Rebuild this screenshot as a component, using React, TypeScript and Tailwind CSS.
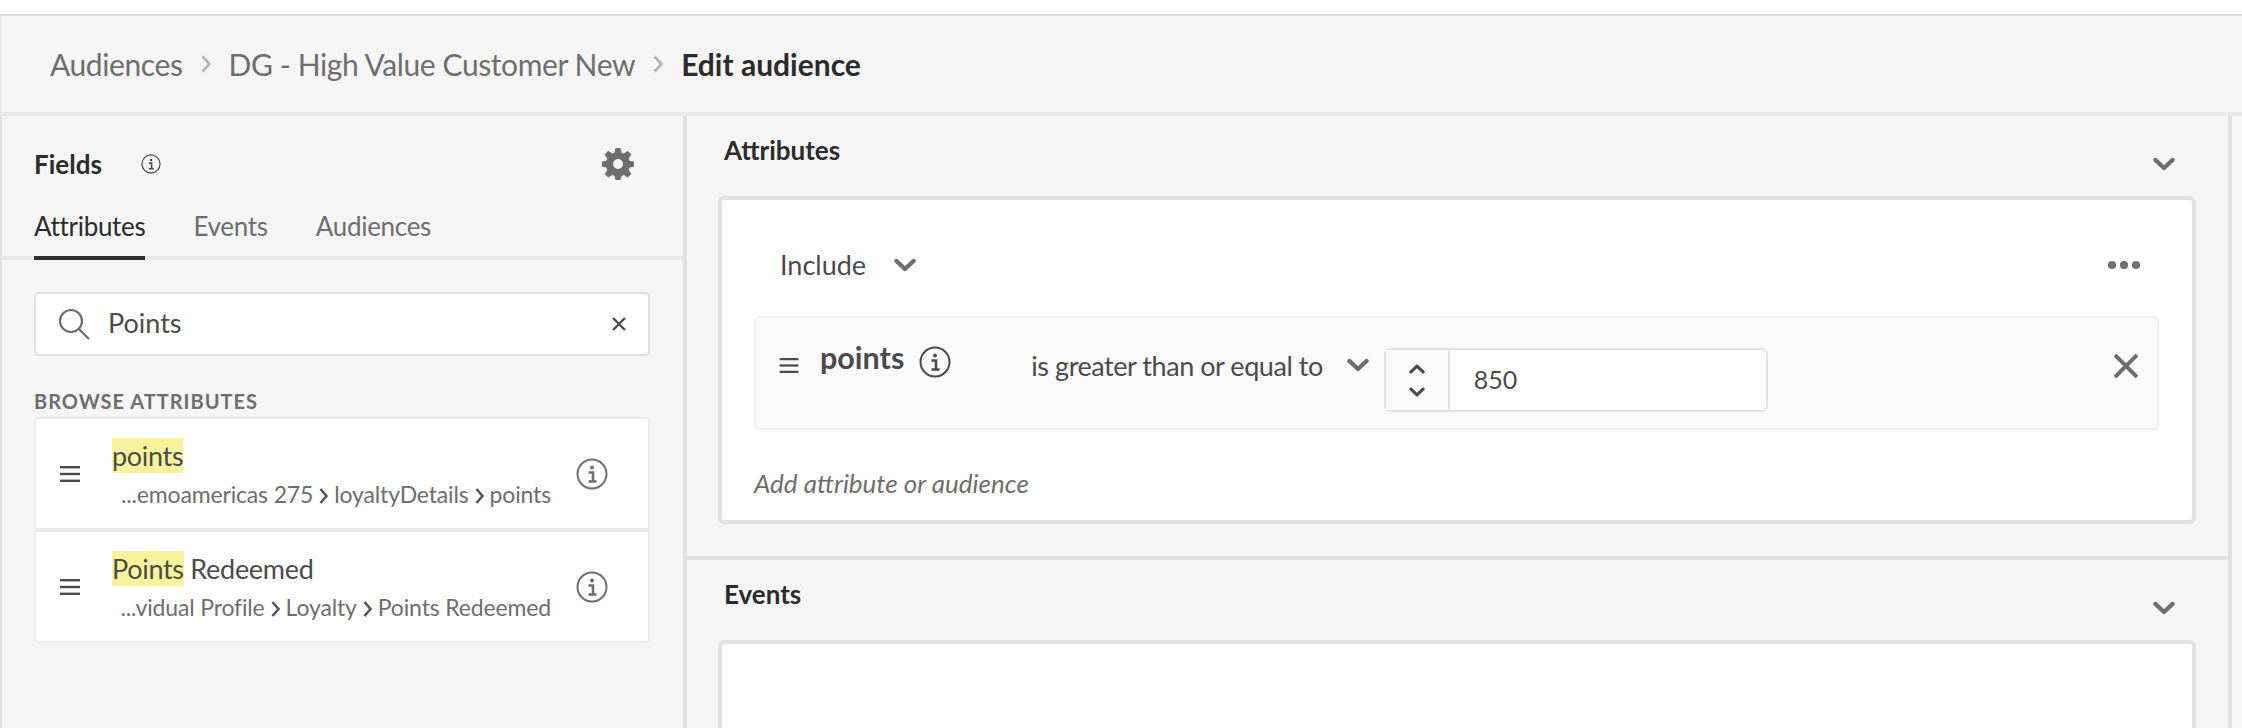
import type { ReactNode } from "react";

const fontStack = { fontFamily: "Lato, 'Noto Sans', sans-serif" };

function Chevron({ className }: { className: string }) {
  return (
    <svg className={className} viewBox="0 0 22 14" fill="none" stroke="currentColor" strokeWidth="4.4" strokeLinecap="round" strokeLinejoin="round">
      <path d="M2.5 3l8.5 8 8.5-8" />
    </svg>
  );
}

function InfoIcon({ className }: { className: string }) {
  return (
    <svg className={className} viewBox="0 0 32 32" fill="none" stroke="currentColor">
      <circle cx="16" cy="16" r="14.5" strokeWidth="2" />
      <circle cx="16" cy="9.5" r="2" fill="currentColor" stroke="none" />
      <path d="M12.5 14.5H17V23M12.5 23.5h8" strokeWidth="2.6" />
    </svg>
  );
}

function DragIcon({ className }: { className: string }) {
  return (
    <svg className={className} viewBox="0 0 20 16" fill="currentColor">
      <rect x="0" y="0" width="20" height="2.4" />
      <rect x="0" y="6.8" width="20" height="2.4" />
      <rect x="0" y="13.6" width="20" height="2.4" />
    </svg>
  );
}

function GearIcon({ className }: { className: string }) {
  return (
    <svg className={className} viewBox="0 0 32 32" fill="currentColor">
      <path
        fillRule="evenodd"
        d="M13.4 0h5.2l.8 4.6 2.4 1 3.9-2.7 3.7 3.7-2.7 3.9 1 2.4 4.3.7v5.2l-4.3.8-1 2.4 2.7 3.9-3.7 3.7-3.9-2.7-2.4 1-.8 4.1h-5.2l-.8-4.1-2.4-1-3.9 2.7-3.7-3.7 2.7-3.9-1-2.4L0 18.7v-5.2l4.3-.7 1-2.4-2.7-3.9 3.7-3.7 3.9 2.7 2.4-1zM16 11a5 5 0 1 0 0 10 5 5 0 0 0 0-10z"
      />
    </svg>
  );
}

function Crumb() {
  return (
    <svg className="h-[20px] w-[10px] text-[#b3b3b3]" viewBox="0 0 10 20" fill="none" stroke="currentColor" strokeWidth="2.6">
      <path d="M1.5 2.5L8.5 10l-7 7.5" />
    </svg>
  );
}

function PathSep() {
  return (
    <svg className="mx-[6px] inline-block h-[18px] w-[9px] align-[-2px] text-[#555]" viewBox="0 0 9 18" fill="none" stroke="currentColor" strokeWidth="2.6">
      <path d="M1.5 2l6 7-6 7" />
    </svg>
  );
}

function AttributeRow({ name, path, last }: { name: ReactNode; path: string[]; last?: boolean }) {
  return (
    <div className={`flex items-center bg-white pl-[24px] pr-[40px] ${last ? "h-[109px]" : "h-[113px] border-b-[4px] border-[#e9e9e9]"}`}>
      <DragIcon className="h-[16px] w-[20px] shrink-0 text-[#4b4b4b]" />
      <div className="ml-[32px] min-w-0 flex-1">
        <div className="h-[35px] text-[27px] leading-[35px] tracking-[-0.3px] text-[#4b4b4b]">{name}</div>
        <div className="mt-[6px] whitespace-nowrap pr-[25px] text-right text-[23px] leading-[30px] tracking-[-0.15px] text-[#6e6e6e]">
          {path.map((part, i) => (
            <span key={part}>
              {i > 0 && <PathSep />}
              {part}
            </span>
          ))}
        </div>
      </div>
      <InfoIcon className="h-[32px] w-[32px] shrink-0 text-[#6e6e6e]" />
    </div>
  );
}

function SectionHeader({ title }: { title: string }) {
  return (
    <div className="flex h-[80px] items-start justify-between pl-[6px] pr-[21px]">
      <h2 className="pt-[15px] text-[26px] font-bold text-[#2c2c2c]">{title}</h2>
      <Chevron className="mt-[41px] h-[14px] w-[22px] text-[#6e6e6e]" />
    </div>
  );
}

export default function App() {
  return (
    <div className="h-[728px] w-[2242px] overflow-hidden bg-white pt-[14px]" style={fontStack}>
      <div className="h-[714px] border-t-2 border-[#dcdcdc] bg-[#f5f5f5]">
        <header className="flex h-[100px] items-center gap-[18px] border-b-[4px] border-l-2 border-[#e9e9e9] pl-[48px] text-[30px] tracking-[-0.4px] text-[#6e6e6e]">
          <span>Audiences</span>
          <Crumb />
          <span>DG - High Value Customer New</span>
          <Crumb />
          <span className="font-bold tracking-[0px] text-[#2c2c2c]">Edit audience</span>
        </header>

        <div className="flex h-[612px]">
          <aside className="w-[687px] shrink-0 border-r-[4px] border-l-2 border-[#e1e1e1]">
            <div className="flex h-[92px] items-center justify-between pl-[32px] pr-[49px] pt-[4px]">
              <div className="flex items-center gap-[39px]">
                <h2 className="text-[26px] font-bold text-[#2c2c2c]">Fields</h2>
                <InfoIcon className="h-[20px] w-[20px] text-[#4b4b4b]" />
              </div>
              <GearIcon className="h-[32px] w-[32px] text-[#6e6e6e]" />
            </div>
            <div className="flex h-[52px] gap-[48px] border-b-[4px] border-[#e9e9e9] pl-[32px] pt-[3px] text-[26px] leading-[31px] tracking-[-0.3px] text-[#6e6e6e]">
              <div className="h-[49px] border-b-[4px] border-[#2c2c2c] text-[#2c2c2c]">Attributes</div>
              <div>Events</div>
              <div>Audiences</div>
            </div>
            <div className="mx-[32px] mt-[32px] flex h-[64px] w-[616px] items-center rounded-[5px] border-2 border-[#e1e1e1] bg-white pl-[22px] pr-[22px] text-[27px] text-[#4b4b4b]">
              <svg className="h-[32px] w-[32px] shrink-0 text-[#6e6e6e]" viewBox="0 0 32 32" fill="none" stroke="currentColor" strokeWidth="2.2">
                <circle cx="13" cy="13" r="11" />
                <path d="M21 21l10 10" />
              </svg>
              <span className="ml-[18px] flex-1 pb-[2px]">Points</span>
              <svg className="h-[14px] w-[14px] text-[#4b4b4b]" viewBox="0 0 14 14" fill="none" stroke="currentColor" strokeWidth="2.4">
                <path d="M1 1l12 12M13 1L1 13" />
              </svg>
            </div>
            <div className="ml-[32px] mt-[30px] h-[31px] text-[20px] font-bold tracking-[1px] text-[#6e6e6e]">BROWSE ATTRIBUTES</div>
            <div className="ml-[32px] w-[616px] overflow-hidden rounded-[5px] border-2 border-[#ebebeb]">
              <AttributeRow
                name={<span className="inline-block bg-[#f8f39b] text-[#4b4b4b]">points</span>}
                path={["...emoamericas 275", "loyaltyDetails", "points"]}
              />
              <AttributeRow
                last
                name={
                  <>
                    <span className="inline-block bg-[#f8f39b]">Points</span> Redeemed
                  </>
                }
                path={["...vidual Profile", "Loyalty", "Points Redeemed"]}
              />
            </div>
          </aside>

          <main className="w-[1545px] shrink-0 border-r-[4px] border-[#e1e1e1]">
            <section className="h-[444px] border-b-[4px] border-[#e1e1e1] pl-[31px] pr-[32px]">
              <SectionHeader title="Attributes" />
              <div className="h-[328px] rounded-[6px] border-[4px] border-[#e1e1e1] bg-white pl-[32px] pr-[33px]">
                <div className="flex h-[116px] items-center justify-between pl-[26px] pr-[19px] pt-[14px]">
                  <div className="flex items-center gap-[28px] text-[27px] text-[#4b4b4b]">
                    <span>Include</span>
                    <Chevron className="h-[14px] w-[22px] text-[#6e6e6e]" />
                  </div>
                  <div className="flex gap-[4px]">
                    <span className="h-[8px] w-[8px] rounded-full bg-[#6e6e6e]" />
                    <span className="h-[8px] w-[8px] rounded-full bg-[#6e6e6e]" />
                    <span className="h-[8px] w-[8px] rounded-full bg-[#6e6e6e]" />
                  </div>
                </div>
                <div className="flex h-[114px] items-start rounded-[6px] border-2 border-[#f0f0f0] bg-[#fafafa] pl-[23px] pr-[19px]">
                  <DragIcon className="mt-[40px] h-[15px] w-[20px] shrink-0 text-[#4b4b4b]" />
                  <span className="ml-[21px] mt-[17px] text-[30.5px] font-bold text-[#4b4b4b]">points</span>
                  <InfoIcon className="ml-[15px] mt-[28px] h-[32px] w-[32px] shrink-0 text-[#4b4b4b]" />
                  <span className="ml-[80px] mt-[28px] whitespace-nowrap text-[27px] tracking-[-0.45px] text-[#4b4b4b]">is greater than or equal to</span>
                  <Chevron className="ml-[24px] mt-[40px] h-[14px] w-[22px] shrink-0 text-[#6e6e6e]" />
                  <div className="ml-[15px] mt-[30px] flex h-[64px] w-[384px] rounded-[6px] border-2 border-[#e1e1e1] bg-white">
                    <div className="flex w-[64px] flex-col items-center justify-center gap-[13px] border-r-2 border-[#e1e1e1] bg-[#fafafa]">
                      <Chevron className="h-[10px] w-[16px] rotate-180 text-[#4b4b4b]" />
                      <Chevron className="h-[10px] w-[16px] text-[#4b4b4b]" />
                    </div>
                    <div className="flex items-center pl-[24px] text-[25px] text-[#4b4b4b]">850</div>
                  </div>
                  <svg className="ml-auto mt-[36px] h-[24px] w-[24px] shrink-0 text-[#6e6e6e]" viewBox="0 0 24 24" fill="none" stroke="currentColor" strokeWidth="4">
                    <path d="M1 1l22 22M23 1L1 23" />
                  </svg>
                </div>
                <div className="mt-[34px] text-[26px] italic text-[#6e6e6e]">Add attribute or audience</div>
              </div>
            </section>
            <section className="h-[168px] pl-[31px] pr-[32px]">
              <SectionHeader title="Events" />
              <div className="h-[300px] rounded-[6px] border-[4px] border-[#e1e1e1] bg-white" />
            </section>
          </main>
          <div className="flex-1 bg-[#f8f8f8]" />
        </div>
      </div>
    </div>
  );
}
